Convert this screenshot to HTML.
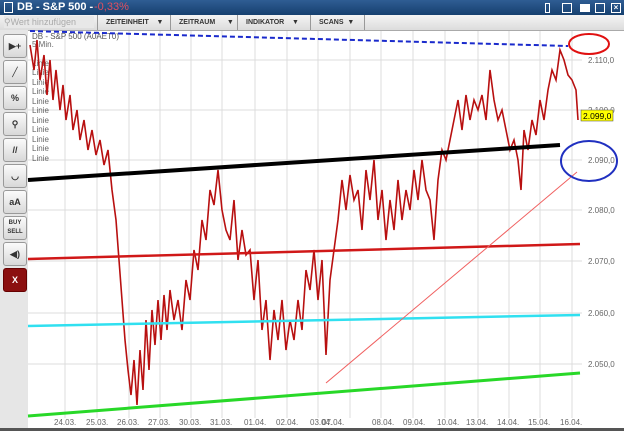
<!DOCTYPE html><html><head><style>
body{margin:0;width:624px;height:431px;overflow:hidden;background:#fff;font-family:"Liberation Sans",sans-serif;position:relative}
.top{position:absolute;left:0;top:0;width:624px;height:15px;background:linear-gradient(#2f5d93,#16406f);color:#fff;font-weight:bold;font-size:11px}
.bar2{position:absolute;left:0;top:15px;width:624px;height:15px;background:linear-gradient(#f4f4f4,#dcdcdc);border-bottom:1px solid #aaa;font-size:7px;font-weight:bold;color:#333}
.tab{position:absolute;top:0;height:15px;border-left:1px solid #999;line-height:15px;padding-left:8px}
.left{position:absolute;left:0;top:30px;width:28px;height:398px;background:#e6e6e6}
.btn{position:absolute;left:3px;width:22px;height:22px;border:1px solid #999;border-radius:3px;background:linear-gradient(#fbfbfb,#d8d8d8);font-size:9px;text-align:center;line-height:22px;color:#333;font-weight:bold}
.wb{position:absolute;top:3px;width:8px;height:8px;border:1px solid #fff}
</style></head><body>
<div class="top"><span style="position:absolute;left:4px;top:2px;border:1px solid #fff;width:7px;height:9px"></span><span style="position:absolute;left:17px;top:1px">DB - S&amp;P 500 -</span><span style="position:absolute;left:94px;top:1px;color:#e05060;font-weight:normal">-0,33%</span>
<div class="wb" style="left:545px;width:3px"></div><div class="wb" style="left:562px"></div><div class="wb" style="left:580px;background:#fff;height:6px;top:4px"></div><div class="wb" style="left:595px"></div><div class="wb" style="left:611px;font-size:8px;line-height:8px;text-align:center">×</div></div>
<div class="bar2"><div style="position:absolute;left:4px;top:1px;width:90px;height:12px;background:#e8e8e8;color:#aaa;font-weight:normal;font-size:9px;line-height:12px">&#9906;Wert hinzufügen</div>
<div class="tab" style="left:97px;width:62px">ZEITEINHEIT &nbsp;&nbsp;&nbsp;▼</div><div class="tab" style="left:170px;width:62px">ZEITRAUM &nbsp;&nbsp;&nbsp;&nbsp;&nbsp;▼</div><div class="tab" style="left:237px;width:62px">INDIKATOR &nbsp;&nbsp;&nbsp;▼</div><div class="tab" style="left:310px;width:45px;border-right:1px solid #999">SCANS &nbsp;▼</div></div>
<div class="left">
<div class="btn" style="top:4px">▶+</div><div class="btn" style="top:30px;font-weight:normal">╱</div><div class="btn" style="top:56px">%</div><div class="btn" style="top:82px">⚲</div><div class="btn" style="top:108px">//</div><div class="btn" style="top:134px">◡</div><div class="btn" style="top:160px">aA</div><div class="btn" style="top:186px;font-size:6px;line-height:9px;padding-top:2px;height:20px">BUY<br>SELL</div><div class="btn" style="top:212px">◀)</div><div class="btn" style="top:238px;background:#8b0f0f;color:#fff;border-color:#600">X</div>
</div>
<div style="position:absolute;left:0;top:428px;width:624px;height:3px;background:#555"></div>
<svg style="position:absolute;left:0;top:0" width="624" height="428">
<g stroke="#dcdcdc" stroke-width="1">
<path d="M65 31V418M97 31V418M129 31V418M160 31V418M191 31V418M222 31V418M255 31V418M287 31V418M318 31V418M350 31V418M381 31V418M413 31V418M445 31V418M478 31V418M509 31V418M540 31V418M572 31V418"/>
<path d="M28 60H582M28 110H582M28 160H582M28 210H582M28 261H582M28 313H582M28 364H582"/></g>
<g font-size="8" fill="#666"><text x="588" y="63">2.110,0</text><text x="588" y="113">2.100,0</text><text x="588" y="163">2.090,0</text><text x="588" y="213">2.080,0</text><text x="588" y="264">2.070,0</text><text x="588" y="316">2.060,0</text><text x="588" y="367">2.050,0</text>
<text y="425" x="54">24.03.</text><text y="425" x="86">25.03.</text><text y="425" x="117">26.03.</text><text y="425" x="148">27.03.</text><text y="425" x="179">30.03.</text><text y="425" x="210">31.03.</text><text y="425" x="244">01.04.</text><text y="425" x="276">02.04.</text><text y="425" x="310">03.04.</text><text y="425" x="322">07.04.</text><text y="425" x="372">08.04.</text><text y="425" x="403">09.04.</text><text y="425" x="437">10.04.</text><text y="425" x="466">13.04.</text><text y="425" x="497">14.04.</text><text y="425" x="528">15.04.</text><text y="425" x="560">16.04.</text>
<text x="32" y="39" fill="#555">DB - S&amp;P 500 (A0AET0)</text><text x="32" y="47">5 Min.</text>
<text x="32" y="66">Linie</text><text x="32" y="75">Linie</text><text x="32" y="85">Linie</text><text x="32" y="94">Linie</text><text x="32" y="104">Linie</text><text x="32" y="113">Linie</text><text x="32" y="123">Linie</text><text x="32" y="132">Linie</text><text x="32" y="142">Linie</text><text x="32" y="151">Linie</text><text x="32" y="161">Linie</text></g>
<polyline fill="none" stroke="#b81010" stroke-width="1.6" points="30,45 34,70 37,40 40,80 44,55 47,95 50,60 53,100 56,70 60,110 63,85 66,120 70,95 73,130 77,110 80,140 84,120 88,150 92,130 96,155 100,140 104,165 108,150 112,190 116,220 119,260 122,300 125,340 128,370 131,395 134,360 137,405 140,350 143,390 146,320 149,370 152,310 155,345 158,300 161,340 164,295 167,330 170,290 174,320 178,300 182,330 186,280 190,300 194,250 198,270 202,220 206,240 210,190 214,205 218,170 222,210 226,230 230,240 234,200 238,260 242,230 246,255 250,250 254,300 258,260 262,330 266,300 270,360 274,310 278,340 282,300 286,350 290,320 294,340 298,300 302,330 306,270 310,290 314,250 318,300 322,260 326,355 330,280 334,250 338,220 342,180 346,210 350,175 354,200 358,190 362,230 366,170 370,200 374,160 378,220 382,190 386,240 390,200 394,230 398,180 402,220 406,190 410,210 414,170 418,200 422,160 426,190 430,200 434,240 438,180 442,150 446,160 450,140 454,120 458,100 462,130 466,95 470,120 474,100 478,110 482,95 486,120 490,70 494,100 498,120 502,110 506,130 510,150 514,140 518,160 521,190 524,130 528,150 532,120 536,135 540,100 544,120 548,90 552,70 556,80 560,50 564,60 568,75 572,80 576,90 578,120"/>
<path d="M30 31 L568 46" stroke="#1a2acc" stroke-width="2" stroke-dasharray="5,3" fill="none"/>
<path d="M28 180 L560 145" stroke="#000" stroke-width="4"/>
<path d="M28 259 L580 244" stroke="#d01818" stroke-width="2.5"/>
<path d="M28 326 L580 315" stroke="#30e0f0" stroke-width="2.5"/>
<path d="M28 416 L580 373" stroke="#28d828" stroke-width="3"/>
<path d="M326 383 L577 172" stroke="#f06060" stroke-width="1"/>
<ellipse cx="589" cy="44" rx="20" ry="10" fill="none" stroke="#e01010" stroke-width="2"/>
<ellipse cx="589" cy="161" rx="28" ry="20" fill="none" stroke="#2030c0" stroke-width="2"/>
<rect x="581" y="110" width="32" height="11" fill="#ff0" stroke="#444" stroke-width="0.5"/><text x="583" y="119" font-size="8.5">2.099,0</text>
</svg>
</body></html>
